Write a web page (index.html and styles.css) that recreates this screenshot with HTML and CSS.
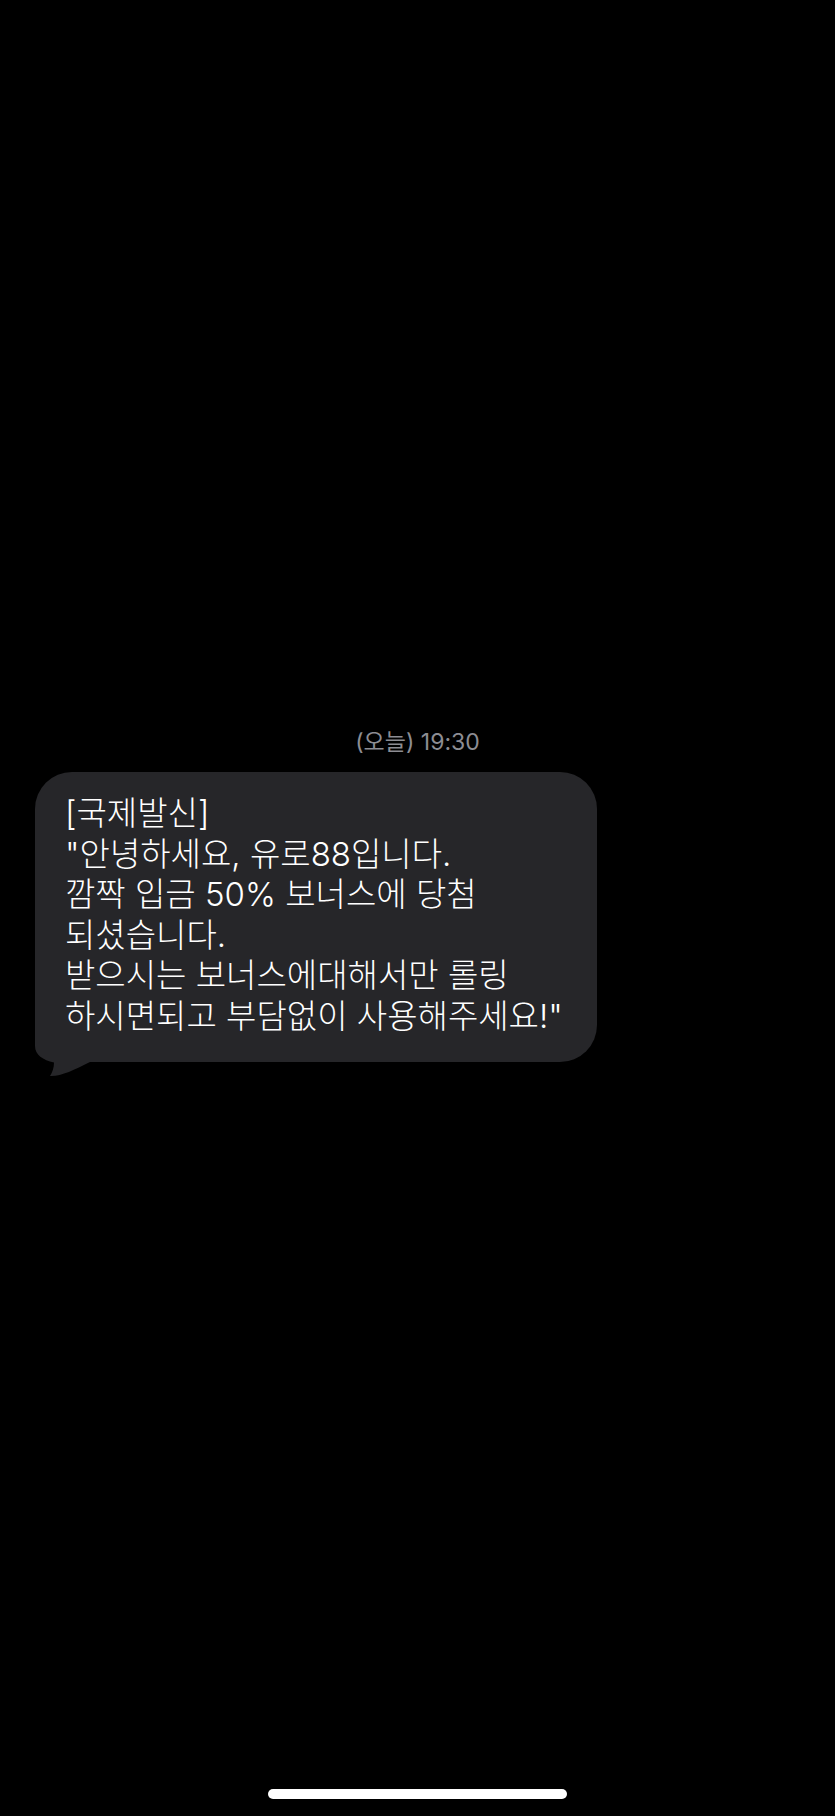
FILE: index.html
```html
<!DOCTYPE html>
<html lang="ko">
<head>
<meta charset="utf-8">
<title>메시지</title>
<link rel="stylesheet" href="styles.css">
</head>
<body>
<div class="screen">
  <div class="thread">
    <div class="stamp">(오늘) 19:30</div>
    <div class="row">
      <div class="bubble">
        <svg class="tail" width="70" height="57" viewBox="0 0 70 57" aria-hidden="true">
          <path d="M0,0 L0,26 C0,35 8,40 19,42.5 C19,47.5 17.5,52 15,56 C26,56.5 39,50 55,42 L70,42 L70,0 Z" fill="#262629"/>
        </svg>
        <p class="msg">[국제발신]<br>"안녕하세요, 유로88입니다.<br>깜짝 입금 50% 보너스에 당첨<br>되셨습니다.<br>받으시는 보너스에대해서만 롤링<br>하시면되고 부담없이 사용해주세요!"</p>
      </div>
    </div>
  </div>
  <div class="home-indicator"></div>
</div>
</body>
</html>
```
FILE: styles.css
```css
html, body {
  margin: 0;
  padding: 0;
  background: #000;
}
.screen {
  width: 835px;
  height: 1816px;
  display: flex;
  flex-direction: column;
  overflow: hidden;
  font-family: "Inter", "Noto Sans CJK KR", "Noto Sans", sans-serif;
}
.thread {
  padding-top: 728px;
  display: flex;
  flex-direction: column;
}
.stamp {
  height: 28px;
  line-height: 28px;
  font-size: 23px;
  color: #8d8d93;
  text-align: center;
  margin-bottom: 16px;
}
.row {
  padding-left: 35px;
  display: flex;
}
.bubble {
  position: relative;
  background: #262629;
  border-radius: 37px;
  border-bottom-left-radius: 24px;
  padding: 21px 34px 26px 30px;
}
.msg {
  position: relative;
  margin: 0;
  font-size: 33px;
  font-weight: 300;
  line-height: 40.5px;
  color: #fff;
  white-space: nowrap;
}
.tail {
  position: absolute;
  left: 0;
  bottom: -15px;
  display: block;
}
.home-indicator {
  margin: auto auto 17px;
  width: 299px;
  height: 10px;
  border-radius: 5px;
  background: #fff;
}
```
